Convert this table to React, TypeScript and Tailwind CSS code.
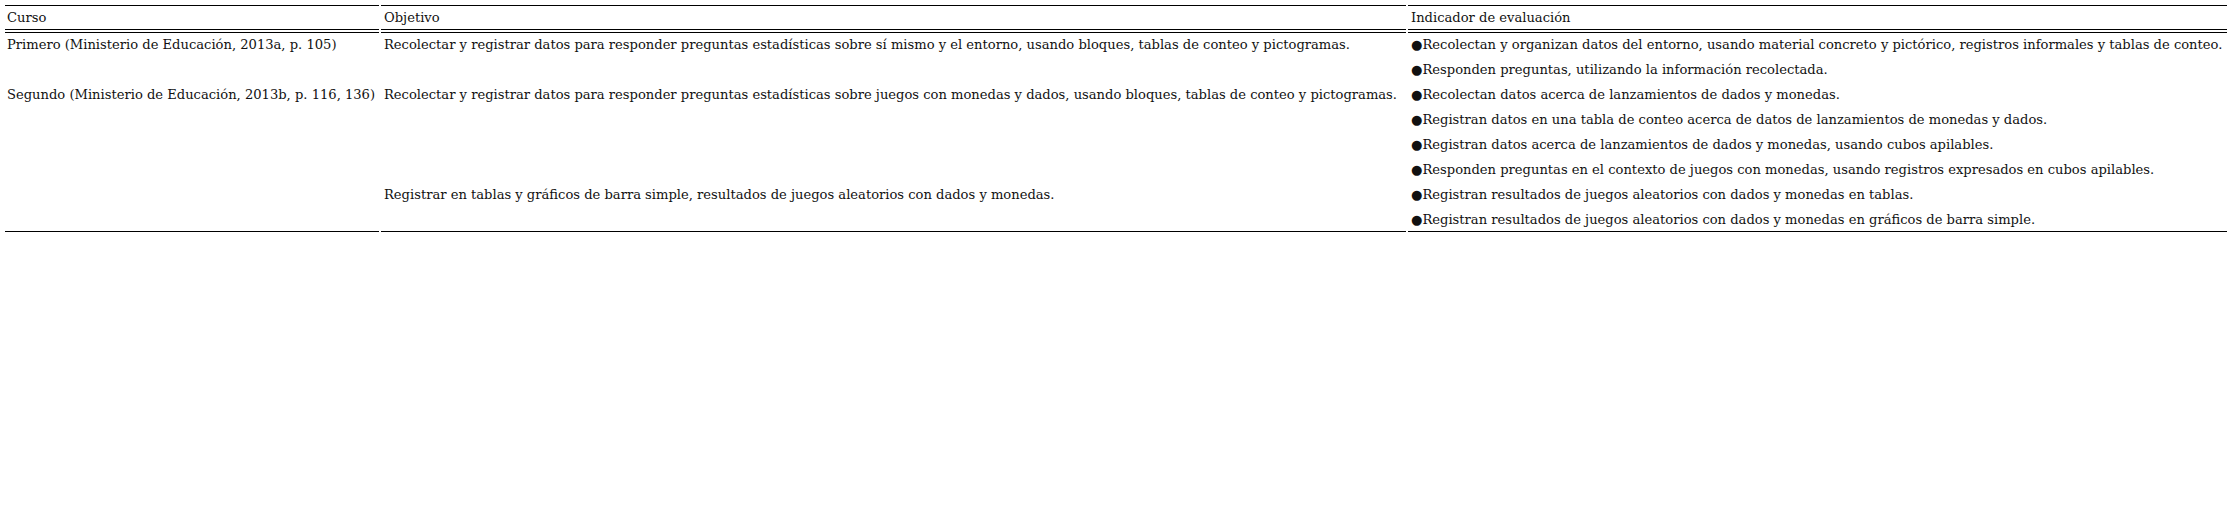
import React from 'react';

type Row = {
  curso?: { text: string; span: number };
  objetivo?: { text: string; span: number };
  indicador: string;
};

const rows: Row[] = [
  {
    curso: { text: 'Primero (Ministerio de Educación, 2013a, p. 105)', span: 2 },
    objetivo: {
      text: 'Recolectar y registrar datos para responder preguntas estadísticas sobre sí mismo y el entorno, usando bloques, tablas de conteo y pictogramas.',
      span: 2,
    },
    indicador:
      'Recolectan y organizan datos del entorno, usando material concreto y pictórico, registros informales y tablas de conteo.',
  },
  { indicador: 'Responden preguntas, utilizando la información recolectada.' },
  {
    curso: { text: 'Segundo (Ministerio de Educación, 2013b, p. 116, 136)', span: 6 },
    objetivo: {
      text: 'Recolectar y registrar datos para responder preguntas estadísticas sobre juegos con monedas y dados, usando bloques, tablas de conteo y pictogramas.',
      span: 4,
    },
    indicador: 'Recolectan datos acerca de lanzamientos de dados y monedas.',
  },
  { indicador: 'Registran datos en una tabla de conteo acerca de datos de lanzamientos de monedas y dados.' },
  { indicador: 'Registran datos acerca de lanzamientos de dados y monedas, usando cubos apilables.' },
  { indicador: 'Responden preguntas en el contexto de juegos con monedas, usando registros expresados en cubos apilables.' },
  {
    objetivo: {
      text: 'Registrar en tablas y gráficos de barra simple, resultados de juegos aleatorios con dados y monedas.',
      span: 2,
    },
    indicador: 'Registran resultados de juegos aleatorios con dados y monedas en tablas.',
  },
  { indicador: 'Registran resultados de juegos aleatorios con dados y monedas en gráficos de barra simple.' },
];

const cell = 'align-top whitespace-nowrap p-0 px-[2px] leading-[23px] text-left font-normal';

export default function App() {
  const last = rows.length - 1;

  return (
    <div className="min-h-screen bg-white p-[3px] font-['DejaVu_Serif',serif] text-[13.1px] leading-[23px] text-[#111]">
      <table className="table-fixed border-separate border-spacing-[2px] w-[2226px]">
        <colgroup>
          <col className="w-[374px]" />
          <col className="w-[1025px]" />
          <col />
        </colgroup>
        <thead>
          <tr>
            <th className={`${cell} border-y border-black`}>Curso</th>
            <th className={`${cell} border-y border-black px-[3px]`}>Objetivo</th>
            <th className={`${cell} border-y border-black px-[3px]`}>Indicador de evaluación</th>
          </tr>
        </thead>
        <tbody>
          {rows.map((row, i) => {
            const top = i === 0 ? 'border-t border-black' : '';
            const cursoBottom = row.curso && i + row.curso.span - 1 === last ? 'border-b border-black' : '';
            const objBottom = row.objetivo && i + row.objetivo.span - 1 === last ? 'border-b border-black' : '';
            const indBottom = i === last ? 'border-b border-black' : '';
            return (
              <tr key={i}>
                {row.curso && (
                  <td rowSpan={row.curso.span} className={`${cell} ${top} ${cursoBottom}`}>
                    {row.curso.text}
                  </td>
                )}
                {row.objetivo && (
                  <td rowSpan={row.objetivo.span} className={`${cell} ${top} ${objBottom} px-[3px]`}>
                    {row.objetivo.text}
                  </td>
                )}
                <td className={`${cell} ${top} ${indBottom} px-[3px]`}>
                  ●{row.indicador}
                </td>
              </tr>
            );
          })}
        </tbody>
      </table>
    </div>
  );
}
